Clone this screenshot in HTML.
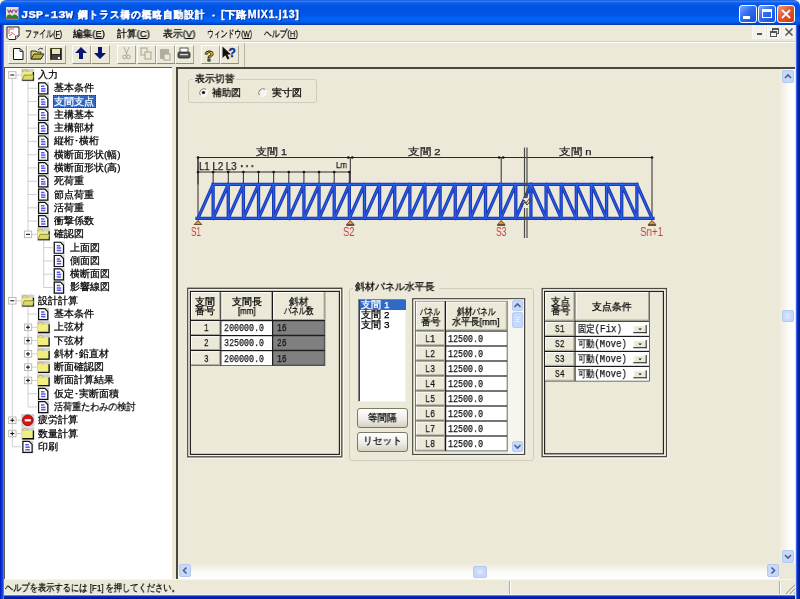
<!DOCTYPE html><html><head><meta charset="utf-8"><style>
*{box-sizing:border-box;margin:0;padding:0}
html,body{width:800px;height:599px;overflow:hidden}
body{position:relative;background:#F2F4F0;font-family:"Liberation Sans",sans-serif;font-size:9.8px;color:#000}
.a{position:absolute}
.t{position:absolute;white-space:nowrap;line-height:10px;height:10px;transform-origin:0 50%;-webkit-text-stroke:0.25px currentColor;will-change:transform}
#title{left:0;top:0;width:800px;height:25px;border-radius:6px 6px 0 0;
 background:linear-gradient(#0A3CC8 0px,#3D8EFF 1px,#1A6CF5 2px,#0558E8 4px,#0054E3 8px,#0055E6 15px,#0063F6 19px,#0064F8 21px,#0050D8 23px,#0038B0 25px)}
#menubar{left:4px;top:25px;width:792px;height:17px;background:#ECE9D8;border-bottom:1px solid #D5D1BE}
#toolbar{left:4px;top:42px;width:792px;height:25px;background:#ECE9D8;border-top:1px solid #fff}
.tb{position:absolute;top:45px;height:19px;border:1px solid;border-color:#fff #A7A493 #8F8C7E #fff;background:#ECE9D8}
#tree{left:4px;top:67px;width:168px;height:512px;background:#fff;border-left:1px solid #5E5C50;border-top:1px solid #5E5C50}
#splitter{left:172px;top:67px;width:4px;height:512px;background:#ECE9D8}
#main{left:176px;top:67px;width:619px;height:512px;background:#ECE9D8;border-left:2px solid #4A483E;border-top:2px solid #4A483E}
#status{left:4px;top:579px;width:792px;height:16px;background:#ECE9D8}
.sel{background:#316AC5;color:#fff}
.frame{position:absolute;border:1px solid;border-color:#8A877A #fff #fff #8A877A}
.frame2{position:absolute;border:1px solid;border-color:#2A2A2A #D8D4C4 #D8D4C4 #2A2A2A}
.gb{position:absolute;border:1px solid #D0CCBA;border-radius:3px}
.hd{position:absolute;background:#ECE9D8;border:1px solid;border-color:#fff #8A877A #8A877A #fff}
.cellw{position:absolute;background:#fff}
.cellg{position:absolute;background:#808080}
.btn{position:absolute;border:1px solid #7A7866;border-radius:3px;background:linear-gradient(#fff,#ECEBE4 60%,#D6D0C0)}
</style></head><body>
<div id="title" class="a"></div>
<svg class="a" style="left:6px;top:7px" width="13" height="13"><rect x="0" y="0" width="12.5" height="12.5" fill="#E8E0D0"/><path d="M1.5 2.5L3 5.5L4.5 3L6 5.5L7.5 2.5M8.5 2.5L10 5.5L11.5 2.5" stroke="#A04090" stroke-width="1.1" fill="none"/><path d="M0.5 11V9.5Q3 6 6 9Q9 6 12 9.5V11Z" fill="#208828"/><rect x="0" y="11" width="12.5" height="1.5" fill="#806040"/></svg>
<div class="t" id="t0" style="left:21.2px;top:9.5px;font-size:11px;color:#fff;font-weight:bold;text-shadow:1px 1px 0 #0A2890;font-family:Liberation Mono;transform:scaleX(1.1251);">JSP-13W</div>
<div class="t" id="t1" style="left:77.5px;top:9.5px;font-size:9.8px;color:#fff;font-weight:bold;text-shadow:1px 1px 0 #0A2890;-webkit-text-stroke:0.3px #fff;letter-spacing:1px;transform:scaleX(0.9659);">鋼トラス橋の概略自動設計</div>
<div class="t" id="t2" style="left:210.5px;top:9.5px;font-size:11px;color:#fff;font-weight:bold;text-shadow:1px 1px 0 #0A2890;font-family:Liberation Mono;transform:scaleX(0.7565);">-</div>
<div class="t" id="t3" style="left:221px;top:9.5px;font-size:10px;color:#fff;font-weight:bold;text-shadow:1px 1px 0 #0A2890;-webkit-text-stroke:0.3px #fff;letter-spacing:0.6px;transform:scaleX(1.0624);">[下路MIX1.j13]</div>
<div class="a" style="left:739px;top:5px;width:18px;height:18px;border:1px solid #fff;border-radius:3px;background:linear-gradient(135deg,#7AA8FF,#2E6CF0 45%,#1550D8)"></div>
<div class="a" style="left:758px;top:5px;width:18px;height:18px;border:1px solid #fff;border-radius:3px;background:linear-gradient(135deg,#7AA8FF,#2E6CF0 45%,#1550D8)"></div>
<div class="a" style="left:777px;top:5px;width:18px;height:18px;border:1px solid #fff;border-radius:3px;background:linear-gradient(135deg,#F09A80,#E05A30 45%,#C83C10)"></div>
<div class="a" style="left:743px;top:16px;width:7px;height:3px;background:#fff"></div>
<div class="a" style="left:762px;top:9px;width:10px;height:9px;border:1px solid #fff;border-top:3px solid #fff"></div>
<svg class="a" style="left:777px;top:5px" width="18" height="18"><path d="M5 5L13 13M13 5L5 13" stroke="#fff" stroke-width="1.8"/></svg>
<div id="menubar" class="a"></div>
<svg class="a" style="left:6px;top:25.5px" width="15" height="15"><path d="M1 1H13V10L9.5 13.5H3L1 11.5Z" fill="#fff" stroke="#222" stroke-width="1"/><path d="M3 3H8M3 3V8M5 6L9 9M3 10L6 8" stroke="#E04848" stroke-width="0.9" fill="none"/><path d="M9.5 13.5V10H13" fill="#ddd" stroke="#222" stroke-width="0.8"/></svg>
<div class="t" id="t4" style="left:25px;top:28.5px;font-size:9.8px;color:#000;;transform:scaleX(0.7046);">ファイル(<u>F</u>)</div>
<div class="t" id="t5" style="left:73px;top:28.5px;font-size:9.8px;color:#000;;transform:scaleX(0.9674);">編集(<u>E</u>)</div>
<div class="t" id="t6" style="left:117px;top:28.5px;font-size:9.8px;color:#000;;transform:scaleX(0.9819);">計算(<u>C</u>)</div>
<div class="t" id="t7" style="left:162.5px;top:28.5px;font-size:9.8px;color:#000;;transform:scaleX(0.9825);">表示(<u>V</u>)</div>
<div class="t" id="t8" style="left:207px;top:28.5px;font-size:9.8px;color:#000;;transform:scaleX(0.6841);">ウィンドウ(<u>W</u>)</div>
<div class="t" id="t9" style="left:264px;top:28.5px;font-size:9.8px;color:#000;;transform:scaleX(0.7796);">ヘルプ(<u>H</u>)</div>
<div class="a" style="left:752px;top:25px;width:14px;height:14px;background:#F3F2EC;border:1px solid #F8F7F2"></div>
<div class="a" style="left:767px;top:25px;width:14px;height:14px;background:#F3F2EC;border:1px solid #F8F7F2"></div>
<div class="a" style="left:782px;top:25px;width:14px;height:14px;background:#F3F2EC;border:1px solid #F8F7F2"></div>
<div class="a" style="left:757px;top:33px;width:5px;height:2px;background:#555"></div>
<div class="a" style="left:772px;top:28px;width:7px;height:6px;border:1px solid #555;border-top-width:2px"></div>
<div class="a" style="left:769.5px;top:31px;width:7px;height:6px;border:1px solid #555;border-top-width:2px;background:#F3F2EC"></div>
<svg class="a" style="left:784px;top:27px" width="10" height="10"><path d="M1.5 1.5L8.5 8.5M8.5 1.5L1.5 8.5" stroke="#555" stroke-width="1.5"/></svg>
<div id="toolbar" class="a"></div>
<div class="tb" style="left:8px;width:19px"></div>
<div class="tb" style="left:27px;width:19px"></div>
<div class="tb" style="left:46px;width:20px"></div>
<div class="tb" style="left:72px;width:19px"></div>
<div class="tb" style="left:91px;width:19px"></div>
<div class="tb" style="left:117px;width:19px"></div>
<div class="tb" style="left:137px;width:19px"></div>
<div class="tb" style="left:156px;width:19px"></div>
<div class="tb" style="left:175px;width:19px"></div>
<div class="tb" style="left:201px;width:19px"></div>
<div class="tb" style="left:220px;width:19px"></div>
<div class="a" style="left:244px;top:43px;width:1px;height:24px;background:#B8B4A2"></div>
<svg class="a" style="left:0;top:42px" width="250" height="26"><path d="M13.5 6.5H20L23 9.5V17.5H13.5Z" fill="#fff" stroke="#111" stroke-width="1"/><path d="M20 6.5V9.5H23" fill="none" stroke="#111" stroke-width="0.8"/><path d="M31 9H36L37 10H41V17H31Z" fill="#D8D070" stroke="#222" stroke-width="0.9"/><path d="M31 17L34 12H44L41 17Z" fill="#B8B040" stroke="#222" stroke-width="0.9"/><path d="M38 8Q40 5 43 7" fill="none" stroke="#222" stroke-width="0.9"/><rect x="50" y="6" width="12" height="12" fill="#222"/><rect x="52" y="7" width="8" height="5" fill="#E8E4C8"/><rect x="52" y="13" width="8" height="5" fill="#444"/><rect x="58" y="15" width="2" height="2" fill="#fff"/><rect x="50.5" y="6.5" width="11" height="11" fill="none" stroke="#606020" stroke-width="0.6"/><path d="M81 5L87 11H83V17H79V11H75Z" fill="#0A1470"/><path d="M100 17L94 11H98V5H102V11H106Z" fill="#0A1470"/><path d="M124 5L127 13M129 5L126 13" stroke="#A8A59A" stroke-width="0.9" fill="none"/><circle cx="124.5" cy="15" r="1.8" fill="none" stroke="#A8A59A"/><circle cx="128.5" cy="15" r="1.8" fill="none" stroke="#A8A59A"/><rect x="141" y="6" width="6" height="7" fill="none" stroke="#A8A59A"/><rect x="145" y="10" width="6" height="7" fill="#ECE9D8" stroke="#A8A59A"/><rect x="160" y="7" width="9" height="10" rx="1" fill="#B0AD9F"/><rect x="164" y="12" width="6" height="6" fill="#ECE9D8" stroke="#A8A59A"/><rect x="180" y="6" width="8" height="5" fill="#fff" stroke="#333" stroke-width="0.8"/><rect x="178" y="10" width="12" height="6" rx="1.5" fill="#555" stroke="#222" stroke-width="0.8"/><rect x="180" y="12" width="8" height="1.2" fill="#ddd"/><text x="204.5" y="18.5" font-size="15.5" font-weight="bold" fill="#F0E800" stroke="#111" stroke-width="0.8" font-family="Liberation Sans">?</text><path d="M222.5 4.5V16L225.3 13.3L227.5 17.5L229.5 16.6L227.4 12.6H231Z" fill="#111"/><text x="228.5" y="15" font-size="12" font-weight="bold" fill="#1030B0" stroke="#0A1060" stroke-width="0.3" font-family="Liberation Sans">?</text></svg>
<div id="tree" class="a"></div>
<div id="splitter" class="a"></div>
<svg class="a" style="left:0;top:0" width="176" height="599"><line x1="12.3" y1="75.0" x2="12.3" y2="446.84" stroke="#D0D0D0" stroke-width="1"/><line x1="28.0" y1="81.64" x2="28.0" y2="234.35999999999999" stroke="#D0D0D0" stroke-width="1"/><line x1="28.0" y1="307.4" x2="28.0" y2="407.0" stroke="#D0D0D0" stroke-width="1"/><line x1="43.7" y1="241.0" x2="43.7" y2="287.48" stroke="#D0D0D0" stroke-width="1"/><line x1="12.3" y1="75.0" x2="21.3" y2="75.0" stroke="#D0D0D0" stroke-width="1"/><rect x="8.700000000000001" y="71.7" width="7.3" height="6.6" fill="#fff" stroke="#B4B4AC" stroke-width="0.9"/><line x1="10.3" y1="75.0" x2="14.3" y2="75.0" stroke="#1A1A1A" stroke-width="1.1"/><rect x="21.3" y="68.8" width="13" height="12.6" fill="#D0D0D0"/><path d="M22.3 72.0L23.3 70.2H26.8L27.8 72.0Z" fill="#F6F0B0" stroke="#9A9460" stroke-width="0.6"/><rect x="22.3" y="72.0" width="11" height="8" fill="#F2EE80"/><path d="M22.3 80.2H33.4V72.0" fill="none" stroke="#111" stroke-width="1.3"/><path d="M22.3 80.0L24.3 75.0H33.8L32.8 80.0Z" fill="#DCD870" stroke="#606030" stroke-width="0.6"/><line x1="28.0" y1="88.28" x2="37.0" y2="88.28" stroke="#D0D0D0" stroke-width="1"/><rect x="37.7" y="82.08" width="11.3" height="12.8" fill="#D4D4D4"/><path d="M38.6 82.88H44.8L47.8 85.88V93.88H38.6Z" fill="#fff" stroke="#111" stroke-width="1.2"/><path d="M41.0 86.28H44.5M41.0 88.68H45.5M41.0 91.08H45.5" stroke="#5A5AE8" stroke-width="1.5"/><line x1="28.0" y1="101.56" x2="37.0" y2="101.56" stroke="#D0D0D0" stroke-width="1"/><rect x="37.7" y="95.36" width="11.3" height="12.8" fill="#D4D4D4"/><path d="M38.6 96.16H44.8L47.8 99.16V107.16H38.6Z" fill="#fff" stroke="#111" stroke-width="1.2"/><path d="M41.0 99.56H44.5M41.0 101.96000000000001H45.5M41.0 104.36H45.5" stroke="#5A5AE8" stroke-width="1.5"/><line x1="28.0" y1="114.84" x2="37.0" y2="114.84" stroke="#D0D0D0" stroke-width="1"/><rect x="37.7" y="108.64" width="11.3" height="12.8" fill="#D4D4D4"/><path d="M38.6 109.44H44.8L47.8 112.44V120.44H38.6Z" fill="#fff" stroke="#111" stroke-width="1.2"/><path d="M41.0 112.84H44.5M41.0 115.24000000000001H45.5M41.0 117.64H45.5" stroke="#5A5AE8" stroke-width="1.5"/><line x1="28.0" y1="128.12" x2="37.0" y2="128.12" stroke="#D0D0D0" stroke-width="1"/><rect x="37.7" y="121.92" width="11.3" height="12.8" fill="#D4D4D4"/><path d="M38.6 122.72H44.8L47.8 125.72V133.72H38.6Z" fill="#fff" stroke="#111" stroke-width="1.2"/><path d="M41.0 126.12H44.5M41.0 128.52H45.5M41.0 130.92000000000002H45.5" stroke="#5A5AE8" stroke-width="1.5"/><line x1="28.0" y1="141.39999999999998" x2="37.0" y2="141.39999999999998" stroke="#D0D0D0" stroke-width="1"/><rect x="37.7" y="135.2" width="11.3" height="12.8" fill="#D4D4D4"/><path d="M38.6 135.99999999999997H44.8L47.8 138.99999999999997V146.99999999999997H38.6Z" fill="#fff" stroke="#111" stroke-width="1.2"/><path d="M41.0 139.39999999999998H44.5M41.0 141.79999999999998H45.5M41.0 144.2H45.5" stroke="#5A5AE8" stroke-width="1.5"/><line x1="28.0" y1="154.68" x2="37.0" y2="154.68" stroke="#D0D0D0" stroke-width="1"/><rect x="37.7" y="148.48000000000002" width="11.3" height="12.8" fill="#D4D4D4"/><path d="M38.6 149.28H44.8L47.8 152.28V160.28H38.6Z" fill="#fff" stroke="#111" stroke-width="1.2"/><path d="M41.0 152.68H44.5M41.0 155.08H45.5M41.0 157.48000000000002H45.5" stroke="#5A5AE8" stroke-width="1.5"/><line x1="28.0" y1="167.95999999999998" x2="37.0" y2="167.95999999999998" stroke="#D0D0D0" stroke-width="1"/><rect x="37.7" y="161.76" width="11.3" height="12.8" fill="#D4D4D4"/><path d="M38.6 162.55999999999997H44.8L47.8 165.55999999999997V173.55999999999997H38.6Z" fill="#fff" stroke="#111" stroke-width="1.2"/><path d="M41.0 165.95999999999998H44.5M41.0 168.35999999999999H45.5M41.0 170.76H45.5" stroke="#5A5AE8" stroke-width="1.5"/><line x1="28.0" y1="181.24" x2="37.0" y2="181.24" stroke="#D0D0D0" stroke-width="1"/><rect x="37.7" y="175.04000000000002" width="11.3" height="12.8" fill="#D4D4D4"/><path d="M38.6 175.84H44.8L47.8 178.84V186.84H38.6Z" fill="#fff" stroke="#111" stroke-width="1.2"/><path d="M41.0 179.24H44.5M41.0 181.64000000000001H45.5M41.0 184.04000000000002H45.5" stroke="#5A5AE8" stroke-width="1.5"/><line x1="28.0" y1="194.51999999999998" x2="37.0" y2="194.51999999999998" stroke="#D0D0D0" stroke-width="1"/><rect x="37.7" y="188.32" width="11.3" height="12.8" fill="#D4D4D4"/><path d="M38.6 189.11999999999998H44.8L47.8 192.11999999999998V200.11999999999998H38.6Z" fill="#fff" stroke="#111" stroke-width="1.2"/><path d="M41.0 192.51999999999998H44.5M41.0 194.92H45.5M41.0 197.32H45.5" stroke="#5A5AE8" stroke-width="1.5"/><line x1="28.0" y1="207.79999999999998" x2="37.0" y2="207.79999999999998" stroke="#D0D0D0" stroke-width="1"/><rect x="37.7" y="201.6" width="11.3" height="12.8" fill="#D4D4D4"/><path d="M38.6 202.39999999999998H44.8L47.8 205.39999999999998V213.39999999999998H38.6Z" fill="#fff" stroke="#111" stroke-width="1.2"/><path d="M41.0 205.79999999999998H44.5M41.0 208.2H45.5M41.0 210.6H45.5" stroke="#5A5AE8" stroke-width="1.5"/><line x1="28.0" y1="221.07999999999998" x2="37.0" y2="221.07999999999998" stroke="#D0D0D0" stroke-width="1"/><rect x="37.7" y="214.88" width="11.3" height="12.8" fill="#D4D4D4"/><path d="M38.6 215.67999999999998H44.8L47.8 218.67999999999998V226.67999999999998H38.6Z" fill="#fff" stroke="#111" stroke-width="1.2"/><path d="M41.0 219.07999999999998H44.5M41.0 221.48H45.5M41.0 223.88H45.5" stroke="#5A5AE8" stroke-width="1.5"/><line x1="28.0" y1="234.35999999999999" x2="37.0" y2="234.35999999999999" stroke="#D0D0D0" stroke-width="1"/><rect x="24.4" y="231.05999999999997" width="7.3" height="6.6" fill="#fff" stroke="#B4B4AC" stroke-width="0.9"/><line x1="26.0" y1="234.35999999999999" x2="30.0" y2="234.35999999999999" stroke="#1A1A1A" stroke-width="1.1"/><rect x="37.0" y="228.16" width="13" height="12.6" fill="#D0D0D0"/><path d="M38.0 231.35999999999999L39.0 229.55999999999997H42.5L43.5 231.35999999999999Z" fill="#F6F0B0" stroke="#9A9460" stroke-width="0.6"/><rect x="38.0" y="231.35999999999999" width="11" height="8" fill="#F2EE80"/><path d="M38.0 239.55999999999997H49.1V231.35999999999999" fill="none" stroke="#111" stroke-width="1.3"/><path d="M38.0 239.35999999999999L40.0 234.35999999999999H49.5L48.5 239.35999999999999Z" fill="#DCD870" stroke="#606030" stroke-width="0.6"/><line x1="43.7" y1="247.64" x2="52.7" y2="247.64" stroke="#D0D0D0" stroke-width="1"/><rect x="53.400000000000006" y="241.44" width="11.3" height="12.8" fill="#D4D4D4"/><path d="M54.300000000000004 242.23999999999998H60.5L63.5 245.23999999999998V253.23999999999998H54.300000000000004Z" fill="#fff" stroke="#111" stroke-width="1.2"/><path d="M56.7 245.64H60.2M56.7 248.04H61.2M56.7 250.44H61.2" stroke="#5A5AE8" stroke-width="1.5"/><line x1="43.7" y1="260.91999999999996" x2="52.7" y2="260.91999999999996" stroke="#D0D0D0" stroke-width="1"/><rect x="53.400000000000006" y="254.71999999999997" width="11.3" height="12.8" fill="#D4D4D4"/><path d="M54.300000000000004 255.51999999999995H60.5L63.5 258.52V266.52H54.300000000000004Z" fill="#fff" stroke="#111" stroke-width="1.2"/><path d="M56.7 258.91999999999996H60.2M56.7 261.31999999999994H61.2M56.7 263.71999999999997H61.2" stroke="#5A5AE8" stroke-width="1.5"/><line x1="43.7" y1="274.2" x2="52.7" y2="274.2" stroke="#D0D0D0" stroke-width="1"/><rect x="53.400000000000006" y="268.0" width="11.3" height="12.8" fill="#D4D4D4"/><path d="M54.300000000000004 268.8H60.5L63.5 271.8V279.8H54.300000000000004Z" fill="#fff" stroke="#111" stroke-width="1.2"/><path d="M56.7 272.2H60.2M56.7 274.59999999999997H61.2M56.7 277.0H61.2" stroke="#5A5AE8" stroke-width="1.5"/><line x1="43.7" y1="287.48" x2="52.7" y2="287.48" stroke="#D0D0D0" stroke-width="1"/><rect x="53.400000000000006" y="281.28000000000003" width="11.3" height="12.8" fill="#D4D4D4"/><path d="M54.300000000000004 282.08000000000004H60.5L63.5 285.08000000000004V293.08000000000004H54.300000000000004Z" fill="#fff" stroke="#111" stroke-width="1.2"/><path d="M56.7 285.48H60.2M56.7 287.88H61.2M56.7 290.28000000000003H61.2" stroke="#5A5AE8" stroke-width="1.5"/><line x1="12.3" y1="300.76" x2="21.3" y2="300.76" stroke="#D0D0D0" stroke-width="1"/><rect x="8.700000000000001" y="297.46" width="7.3" height="6.6" fill="#fff" stroke="#B4B4AC" stroke-width="0.9"/><line x1="10.3" y1="300.76" x2="14.3" y2="300.76" stroke="#1A1A1A" stroke-width="1.1"/><rect x="21.3" y="294.56" width="13" height="12.6" fill="#D0D0D0"/><path d="M22.3 297.76L23.3 295.96H26.8L27.8 297.76Z" fill="#F6F0B0" stroke="#9A9460" stroke-width="0.6"/><rect x="22.3" y="297.76" width="11" height="8" fill="#F2EE80"/><path d="M22.3 305.96H33.4V297.76" fill="none" stroke="#111" stroke-width="1.3"/><path d="M22.3 305.76L24.3 300.76H33.8L32.8 305.76Z" fill="#DCD870" stroke="#606030" stroke-width="0.6"/><line x1="28.0" y1="314.03999999999996" x2="37.0" y2="314.03999999999996" stroke="#D0D0D0" stroke-width="1"/><rect x="37.7" y="307.84" width="11.3" height="12.8" fill="#D4D4D4"/><path d="M38.6 308.64H44.8L47.8 311.64V319.64H38.6Z" fill="#fff" stroke="#111" stroke-width="1.2"/><path d="M41.0 312.03999999999996H44.5M41.0 314.43999999999994H45.5M41.0 316.84H45.5" stroke="#5A5AE8" stroke-width="1.5"/><line x1="28.0" y1="327.32" x2="37.0" y2="327.32" stroke="#D0D0D0" stroke-width="1"/><rect x="24.4" y="324.02" width="7.3" height="6.6" fill="#fff" stroke="#B4B4AC" stroke-width="0.9"/><line x1="26.0" y1="327.32" x2="30.0" y2="327.32" stroke="#1A1A1A" stroke-width="1.1"/><line x1="28.0" y1="325.32" x2="28.0" y2="329.32" stroke="#1A1A1A" stroke-width="1.1"/><rect x="37.0" y="321.12" width="13" height="12.6" fill="#D0D0D0"/><path d="M38.0 324.32L39.0 322.52H42.5L43.5 324.32Z" fill="#F6F0B0" stroke="#9A9460" stroke-width="0.6"/><rect x="38.0" y="324.32" width="11" height="8" fill="#F2EE80"/><path d="M38.0 332.52H49.1V324.32" fill="none" stroke="#111" stroke-width="1.3"/><line x1="28.0" y1="340.59999999999997" x2="37.0" y2="340.59999999999997" stroke="#D0D0D0" stroke-width="1"/><rect x="24.4" y="337.29999999999995" width="7.3" height="6.6" fill="#fff" stroke="#B4B4AC" stroke-width="0.9"/><line x1="26.0" y1="340.59999999999997" x2="30.0" y2="340.59999999999997" stroke="#1A1A1A" stroke-width="1.1"/><line x1="28.0" y1="338.59999999999997" x2="28.0" y2="342.59999999999997" stroke="#1A1A1A" stroke-width="1.1"/><rect x="37.0" y="334.4" width="13" height="12.6" fill="#D0D0D0"/><path d="M38.0 337.59999999999997L39.0 335.79999999999995H42.5L43.5 337.59999999999997Z" fill="#F6F0B0" stroke="#9A9460" stroke-width="0.6"/><rect x="38.0" y="337.59999999999997" width="11" height="8" fill="#F2EE80"/><path d="M38.0 345.79999999999995H49.1V337.59999999999997" fill="none" stroke="#111" stroke-width="1.3"/><line x1="28.0" y1="353.88" x2="37.0" y2="353.88" stroke="#D0D0D0" stroke-width="1"/><rect x="24.4" y="350.58" width="7.3" height="6.6" fill="#fff" stroke="#B4B4AC" stroke-width="0.9"/><line x1="26.0" y1="353.88" x2="30.0" y2="353.88" stroke="#1A1A1A" stroke-width="1.1"/><line x1="28.0" y1="351.88" x2="28.0" y2="355.88" stroke="#1A1A1A" stroke-width="1.1"/><rect x="37.0" y="347.68" width="13" height="12.6" fill="#D0D0D0"/><path d="M38.0 350.88L39.0 349.08H42.5L43.5 350.88Z" fill="#F6F0B0" stroke="#9A9460" stroke-width="0.6"/><rect x="38.0" y="350.88" width="11" height="8" fill="#F2EE80"/><path d="M38.0 359.08H49.1V350.88" fill="none" stroke="#111" stroke-width="1.3"/><line x1="28.0" y1="367.15999999999997" x2="37.0" y2="367.15999999999997" stroke="#D0D0D0" stroke-width="1"/><rect x="24.4" y="363.85999999999996" width="7.3" height="6.6" fill="#fff" stroke="#B4B4AC" stroke-width="0.9"/><line x1="26.0" y1="367.15999999999997" x2="30.0" y2="367.15999999999997" stroke="#1A1A1A" stroke-width="1.1"/><line x1="28.0" y1="365.15999999999997" x2="28.0" y2="369.15999999999997" stroke="#1A1A1A" stroke-width="1.1"/><rect x="37.0" y="360.96" width="13" height="12.6" fill="#D0D0D0"/><path d="M38.0 364.15999999999997L39.0 362.35999999999996H42.5L43.5 364.15999999999997Z" fill="#F6F0B0" stroke="#9A9460" stroke-width="0.6"/><rect x="38.0" y="364.15999999999997" width="11" height="8" fill="#F2EE80"/><path d="M38.0 372.35999999999996H49.1V364.15999999999997" fill="none" stroke="#111" stroke-width="1.3"/><line x1="28.0" y1="380.44" x2="37.0" y2="380.44" stroke="#D0D0D0" stroke-width="1"/><rect x="24.4" y="377.14" width="7.3" height="6.6" fill="#fff" stroke="#B4B4AC" stroke-width="0.9"/><line x1="26.0" y1="380.44" x2="30.0" y2="380.44" stroke="#1A1A1A" stroke-width="1.1"/><line x1="28.0" y1="378.44" x2="28.0" y2="382.44" stroke="#1A1A1A" stroke-width="1.1"/><rect x="37.0" y="374.24" width="13" height="12.6" fill="#D0D0D0"/><path d="M38.0 377.44L39.0 375.64H42.5L43.5 377.44Z" fill="#F6F0B0" stroke="#9A9460" stroke-width="0.6"/><rect x="38.0" y="377.44" width="11" height="8" fill="#F2EE80"/><path d="M38.0 385.64H49.1V377.44" fill="none" stroke="#111" stroke-width="1.3"/><line x1="28.0" y1="393.71999999999997" x2="37.0" y2="393.71999999999997" stroke="#D0D0D0" stroke-width="1"/><rect x="37.7" y="387.52" width="11.3" height="12.8" fill="#D4D4D4"/><path d="M38.6 388.32H44.8L47.8 391.32V399.32H38.6Z" fill="#fff" stroke="#111" stroke-width="1.2"/><path d="M41.0 391.71999999999997H44.5M41.0 394.11999999999995H45.5M41.0 396.52H45.5" stroke="#5A5AE8" stroke-width="1.5"/><line x1="28.0" y1="407.0" x2="37.0" y2="407.0" stroke="#D0D0D0" stroke-width="1"/><rect x="37.7" y="400.8" width="11.3" height="12.8" fill="#D4D4D4"/><path d="M38.6 401.6H44.8L47.8 404.6V412.6H38.6Z" fill="#fff" stroke="#111" stroke-width="1.2"/><path d="M41.0 405.0H44.5M41.0 407.4H45.5M41.0 409.8H45.5" stroke="#5A5AE8" stroke-width="1.5"/><line x1="12.3" y1="420.28" x2="21.3" y2="420.28" stroke="#D0D0D0" stroke-width="1"/><rect x="8.700000000000001" y="416.97999999999996" width="7.3" height="6.6" fill="#fff" stroke="#B4B4AC" stroke-width="0.9"/><line x1="10.3" y1="420.28" x2="14.3" y2="420.28" stroke="#1A1A1A" stroke-width="1.1"/><line x1="12.3" y1="418.28" x2="12.3" y2="422.28" stroke="#1A1A1A" stroke-width="1.1"/><rect x="21.3" y="414.08" width="13" height="12.6" fill="#D0D0D0"/><circle cx="27.8" cy="420.28" r="5.4" fill="#E01010" stroke="#600" stroke-width="0.7"/><rect x="24.8" y="419.17999999999995" width="6" height="2.2" fill="#fff"/><line x1="12.3" y1="433.56" x2="21.3" y2="433.56" stroke="#D0D0D0" stroke-width="1"/><rect x="8.700000000000001" y="430.26" width="7.3" height="6.6" fill="#fff" stroke="#B4B4AC" stroke-width="0.9"/><line x1="10.3" y1="433.56" x2="14.3" y2="433.56" stroke="#1A1A1A" stroke-width="1.1"/><line x1="12.3" y1="431.56" x2="12.3" y2="435.56" stroke="#1A1A1A" stroke-width="1.1"/><rect x="21.3" y="427.36" width="13" height="12.6" fill="#D0D0D0"/><path d="M22.3 430.56L23.3 428.76H26.8L27.8 430.56Z" fill="#F6F0B0" stroke="#9A9460" stroke-width="0.6"/><rect x="22.3" y="430.56" width="11" height="8" fill="#F2EE80"/><path d="M22.3 438.76H33.4V430.56" fill="none" stroke="#111" stroke-width="1.3"/><line x1="12.3" y1="446.84" x2="21.3" y2="446.84" stroke="#D0D0D0" stroke-width="1"/><rect x="22.0" y="440.64" width="11.3" height="12.8" fill="#D4D4D4"/><path d="M22.900000000000002 441.44H29.1L32.1 444.44V452.44H22.900000000000002Z" fill="#fff" stroke="#111" stroke-width="1.2"/><path d="M25.3 444.84H28.8M25.3 447.23999999999995H29.8M25.3 449.64H29.8" stroke="#5A5AE8" stroke-width="1.5"/></svg>
<div class="t" id="t10" style="left:38px;top:70.0px;font-size:9.8px;color:#000;;">入力</div>
<div class="t" id="t11" style="left:54px;top:83.28px;font-size:9.8px;color:#000;;">基本条件</div>
<div class="a sel" style="left:52.8px;top:95.26px;width:43px;height:13px;border:1px dotted #1A3A80"></div>
<div class="t" id="t12" style="left:54px;top:96.56px;font-size:9.8px;color:#fff;;">支間支点</div>
<div class="t" id="t13" style="left:54px;top:109.84px;font-size:9.8px;color:#000;;">主構基本</div>
<div class="t" id="t14" style="left:54px;top:123.12px;font-size:9.8px;color:#000;;">主構部材</div>
<div class="t" id="t15" style="left:54px;top:136.39999999999998px;font-size:9.8px;color:#000;;">縦桁･横桁</div>
<div class="t" id="t16" style="left:54px;top:149.68px;font-size:9.8px;color:#000;;">横断面形状(幅)</div>
<div class="t" id="t17" style="left:54px;top:162.95999999999998px;font-size:9.8px;color:#000;;">横断面形状(高)</div>
<div class="t" id="t18" style="left:54px;top:176.24px;font-size:9.8px;color:#000;;">死荷重</div>
<div class="t" id="t19" style="left:54px;top:189.51999999999998px;font-size:9.8px;color:#000;;">節点荷重</div>
<div class="t" id="t20" style="left:54px;top:202.79999999999998px;font-size:9.8px;color:#000;;">活荷重</div>
<div class="t" id="t21" style="left:54px;top:216.07999999999998px;font-size:9.8px;color:#000;;">衝撃係数</div>
<div class="t" id="t22" style="left:54px;top:229.35999999999999px;font-size:9.8px;color:#000;;">確認図</div>
<div class="t" id="t23" style="left:69.5px;top:242.64px;font-size:9.8px;color:#000;;">上面図</div>
<div class="t" id="t24" style="left:69.5px;top:255.91999999999996px;font-size:9.8px;color:#000;;">側面図</div>
<div class="t" id="t25" style="left:69.5px;top:269.2px;font-size:9.8px;color:#000;;">横断面図</div>
<div class="t" id="t26" style="left:69.5px;top:282.48px;font-size:9.8px;color:#000;;">影響線図</div>
<div class="t" id="t27" style="left:38px;top:295.76px;font-size:9.8px;color:#000;;">設計計算</div>
<div class="t" id="t28" style="left:54px;top:309.03999999999996px;font-size:9.8px;color:#000;;">基本条件</div>
<div class="t" id="t29" style="left:54px;top:322.32px;font-size:9.8px;color:#000;;">上弦材</div>
<div class="t" id="t30" style="left:54px;top:335.59999999999997px;font-size:9.8px;color:#000;;">下弦材</div>
<div class="t" id="t31" style="left:54px;top:348.88px;font-size:9.8px;color:#000;;">斜材･鉛直材</div>
<div class="t" id="t32" style="left:54px;top:362.15999999999997px;font-size:9.8px;color:#000;;">断面確認図</div>
<div class="t" id="t33" style="left:54px;top:375.44px;font-size:9.8px;color:#000;;">断面計算結果</div>
<div class="t" id="t34" style="left:54px;top:388.71999999999997px;font-size:9.8px;color:#000;;">仮定･実断面積</div>
<div class="t" id="t35" style="left:54px;top:402.0px;font-size:9.8px;color:#000;;transform:scaleX(0.9067);">活荷重たわみの検討</div>
<div class="t" id="t36" style="left:38px;top:415.28px;font-size:9.8px;color:#000;;">疲労計算</div>
<div class="t" id="t37" style="left:38px;top:428.56px;font-size:9.8px;color:#000;;">数量計算</div>
<div class="t" id="t38" style="left:38px;top:441.84px;font-size:9.8px;color:#000;;">印刷</div>
<div id="main" class="a"></div>
<div class="gb" style="left:187.5px;top:79px;width:129px;height:24px"></div>
<div class="a" style="left:193px;top:74px;width:43px;height:10px;background:#ECE9D8"></div>
<div class="t" id="t39" style="left:195px;top:73.5px;font-size:9.8px;color:#000;;transform:scaleX(0.9875);">表示切替</div>
<svg class="a" style="left:196px;top:86px" width="120" height="14"><circle cx="7.5" cy="6.5" r="4.3" fill="#F4F3EE"/><path d="M4.5 9.5A4.3 4.3 0 0 1 10.5 3.5" fill="none" stroke="#808070" stroke-width="1"/><path d="M10.5 3.5A4.3 4.3 0 0 1 4.5 9.5" fill="none" stroke="#FFFFFF" stroke-width="1"/><circle cx="7.5" cy="6.5" r="1.6" fill="#111"/><circle cx="66.5" cy="6.5" r="4.3" fill="#F4F3EE"/><path d="M63.5 9.5A4.3 4.3 0 0 1 69.5 3.5" fill="none" stroke="#808070" stroke-width="1"/><path d="M69.5 3.5A4.3 4.3 0 0 1 63.5 9.5" fill="none" stroke="#FFFFFF" stroke-width="1"/></svg>
<div class="t" id="t40" style="left:212px;top:87.5px;font-size:9.8px;color:#000;;transform:scaleX(0.9667);">補助図</div>
<div class="t" id="t41" style="left:272px;top:87.5px;font-size:9.8px;color:#000;;transform:scaleX(1.0000);">実寸図</div>
<svg class="a" style="left:0;top:0" width="800" height="599"><line x1="198" y1="157.5" x2="652" y2="157.5" stroke="#2A2A2A" stroke-width="1"/><line x1="198" y1="172.0" x2="350" y2="172.0" stroke="#2A2A2A" stroke-width="1"/><line x1="198" y1="157.5" x2="198" y2="218.3" stroke="#2A2A2A" stroke-width="1"/><line x1="350.3" y1="157.5" x2="350.3" y2="218.3" stroke="#2A2A2A" stroke-width="1"/><line x1="501.2" y1="157.5" x2="501.2" y2="218.3" stroke="#2A2A2A" stroke-width="1"/><line x1="652" y1="157.5" x2="652" y2="218.3" stroke="#2A2A2A" stroke-width="1"/><circle cx="198" cy="157.5" r="1.3" fill="#111"/><circle cx="348.3" cy="157.5" r="1.3" fill="#111"/><circle cx="352.3" cy="157.5" r="1.3" fill="#111"/><circle cx="499.2" cy="157.5" r="1.3" fill="#111"/><circle cx="503.2" cy="157.5" r="1.3" fill="#111"/><circle cx="652" cy="157.5" r="1.3" fill="#111"/><line x1="198.0" y1="172" x2="198.0" y2="184.4" stroke="#2A2A2A" stroke-width="1"/><circle cx="198.0" cy="172" r="1.3" fill="#111"/><line x1="213.133" y1="172" x2="213.133" y2="184.4" stroke="#2A2A2A" stroke-width="1"/><circle cx="213.133" cy="172" r="1.3" fill="#111"/><line x1="228.266" y1="172" x2="228.266" y2="184.4" stroke="#2A2A2A" stroke-width="1"/><circle cx="228.266" cy="172" r="1.3" fill="#111"/><line x1="243.399" y1="172" x2="243.399" y2="184.4" stroke="#2A2A2A" stroke-width="1"/><circle cx="243.399" cy="172" r="1.3" fill="#111"/><line x1="258.532" y1="172" x2="258.532" y2="184.4" stroke="#2A2A2A" stroke-width="1"/><circle cx="258.532" cy="172" r="1.3" fill="#111"/><line x1="273.66499999999996" y1="172" x2="273.66499999999996" y2="184.4" stroke="#2A2A2A" stroke-width="1"/><circle cx="273.66499999999996" cy="172" r="1.3" fill="#111"/><line x1="288.798" y1="172" x2="288.798" y2="184.4" stroke="#2A2A2A" stroke-width="1"/><circle cx="288.798" cy="172" r="1.3" fill="#111"/><line x1="303.931" y1="172" x2="303.931" y2="184.4" stroke="#2A2A2A" stroke-width="1"/><circle cx="303.931" cy="172" r="1.3" fill="#111"/><line x1="319.06399999999996" y1="172" x2="319.06399999999996" y2="184.4" stroke="#2A2A2A" stroke-width="1"/><circle cx="319.06399999999996" cy="172" r="1.3" fill="#111"/><line x1="334.197" y1="172" x2="334.197" y2="184.4" stroke="#2A2A2A" stroke-width="1"/><circle cx="334.197" cy="172" r="1.3" fill="#111"/><line x1="349.33" y1="172" x2="349.33" y2="184.4" stroke="#2A2A2A" stroke-width="1"/><circle cx="349.33" cy="172" r="1.3" fill="#111"/><line x1="198" y1="157.5" x2="198" y2="172" stroke="#2A2A2A" stroke-width="1"/><path d="M213.13 184.40L636.86 184.40M197.00 218.30L653.00 218.30M213.13 184.40L213.13 218.30M228.27 184.40L228.27 218.30M243.40 184.40L243.40 218.30M258.53 184.40L258.53 218.30M273.66 184.40L273.66 218.30M288.80 184.40L288.80 218.30M303.93 184.40L303.93 218.30M319.06 184.40L319.06 218.30M334.20 184.40L334.20 218.30M349.33 184.40L349.33 218.30M364.46 184.40L364.46 218.30M379.60 184.40L379.60 218.30M394.73 184.40L394.73 218.30M409.86 184.40L409.86 218.30M425.00 184.40L425.00 218.30M440.13 184.40L440.13 218.30M455.26 184.40L455.26 218.30M470.39 184.40L470.39 218.30M485.53 184.40L485.53 218.30M500.66 184.40L500.66 218.30M515.79 184.40L515.79 218.30M530.93 184.40L530.93 218.30M546.06 184.40L546.06 218.30M561.19 184.40L561.19 218.30M576.33 184.40L576.33 218.30M591.46 184.40L591.46 218.30M606.59 184.40L606.59 218.30M621.72 184.40L621.72 218.30M636.86 184.40L636.86 218.30M198.00 218.30L213.13 184.40M213.13 218.30L228.27 184.40M228.27 218.30L243.40 184.40M243.40 218.30L258.53 184.40M258.53 218.30L273.66 184.40M273.66 218.30L288.80 184.40M288.80 218.30L303.93 184.40M303.93 218.30L319.06 184.40M319.06 218.30L334.20 184.40M334.20 218.30L349.33 184.40M349.33 218.30L364.46 184.40M364.46 218.30L379.60 184.40M379.60 218.30L394.73 184.40M394.73 218.30L409.86 184.40M409.86 218.30L424.99 184.40M425.00 218.30L440.13 184.40M440.13 218.30L455.26 184.40M455.26 218.30L470.39 184.40M470.39 218.30L485.53 184.40M485.53 218.30L500.66 184.40M500.66 218.30L515.79 184.40M515.79 218.30L530.93 184.40M530.93 184.40L546.06 218.30M546.06 184.40L561.19 218.30M561.19 184.40L576.33 218.30M576.33 184.40L591.46 218.30M591.46 184.40L606.59 218.30M606.59 184.40L621.72 218.30M621.72 184.40L636.86 218.30M636.86 184.40L651.99 218.30" stroke="#1A3BB8" stroke-width="3.3" fill="none" stroke-linecap="square"/><path d="M213.13 184.40L636.86 184.40M197.00 218.30L653.00 218.30M213.13 184.40L213.13 218.30M228.27 184.40L228.27 218.30M243.40 184.40L243.40 218.30M258.53 184.40L258.53 218.30M273.66 184.40L273.66 218.30M288.80 184.40L288.80 218.30M303.93 184.40L303.93 218.30M319.06 184.40L319.06 218.30M334.20 184.40L334.20 218.30M349.33 184.40L349.33 218.30M364.46 184.40L364.46 218.30M379.60 184.40L379.60 218.30M394.73 184.40L394.73 218.30M409.86 184.40L409.86 218.30M425.00 184.40L425.00 218.30M440.13 184.40L440.13 218.30M455.26 184.40L455.26 218.30M470.39 184.40L470.39 218.30M485.53 184.40L485.53 218.30M500.66 184.40L500.66 218.30M515.79 184.40L515.79 218.30M530.93 184.40L530.93 218.30M546.06 184.40L546.06 218.30M561.19 184.40L561.19 218.30M576.33 184.40L576.33 218.30M591.46 184.40L591.46 218.30M606.59 184.40L606.59 218.30M621.72 184.40L621.72 218.30M636.86 184.40L636.86 218.30M198.00 218.30L213.13 184.40M213.13 218.30L228.27 184.40M228.27 218.30L243.40 184.40M243.40 218.30L258.53 184.40M258.53 218.30L273.66 184.40M273.66 218.30L288.80 184.40M288.80 218.30L303.93 184.40M303.93 218.30L319.06 184.40M319.06 218.30L334.20 184.40M334.20 218.30L349.33 184.40M349.33 218.30L364.46 184.40M364.46 218.30L379.60 184.40M379.60 218.30L394.73 184.40M394.73 218.30L409.86 184.40M409.86 218.30L424.99 184.40M425.00 218.30L440.13 184.40M440.13 218.30L455.26 184.40M455.26 218.30L470.39 184.40M470.39 218.30L485.53 184.40M485.53 218.30L500.66 184.40M500.66 218.30L515.79 184.40M515.79 218.30L530.93 184.40M530.93 184.40L546.06 218.30M546.06 184.40L561.19 218.30M561.19 184.40L576.33 218.30M576.33 184.40L591.46 218.30M591.46 184.40L606.59 218.30M606.59 184.40L621.72 218.30M621.72 184.40L636.86 218.30M636.86 184.40L651.99 218.30" stroke="#2C5FE6" stroke-width="1.1" fill="none"/><line x1="524.5" y1="147.5" x2="524.5" y2="238" stroke="#4A4A4A" stroke-width="1.2"/><line x1="527" y1="147.5" x2="527" y2="238" stroke="#4A4A4A" stroke-width="1.2"/><rect x="523.5" y="198" width="4.5" height="10" fill="#ECE9D8"/><path d="M520 205L524 200L526 203L530 198" fill="none" stroke="#333" stroke-width="1"/><path d="M521 207L525 202L527 205L531 200" fill="none" stroke="#333" stroke-width="1"/><path d="M198 220.5L201.8 224.5H194.2Z" fill="#E89040" stroke="#503018" stroke-width="0.8"/><path d="M350.3 220.5L354.1 224.5H346.5Z" fill="#E89040" stroke="#503018" stroke-width="0.8"/><line x1="346.3" y1="225.5" x2="354.3" y2="225.5" stroke="#333" stroke-width="0.8"/><path d="M501.2 220.5L505.0 224.5H497.4Z" fill="#E89040" stroke="#503018" stroke-width="0.8"/><line x1="497.2" y1="225.5" x2="505.2" y2="225.5" stroke="#333" stroke-width="0.8"/><path d="M652 220.5L655.8 224.5H648.2Z" fill="#E89040" stroke="#503018" stroke-width="0.8"/><line x1="648" y1="225.5" x2="656" y2="225.5" stroke="#333" stroke-width="0.8"/></svg>
<div class="t" id="t42" style="left:256px;top:146.5px;font-size:9.8px;color:#222;;transform:scaleX(1.1004);">支間 1</div>
<div class="t" id="t43" style="left:407.5px;top:146.5px;font-size:9.8px;color:#222;;transform:scaleX(1.1536);">支間 2</div>
<div class="t" id="t44" style="left:558.7px;top:146.5px;font-size:9.8px;color:#222;;transform:scaleX(1.1536);">支間 n</div>
<div class="t" id="t45" style="left:199px;top:160.5px;font-size:11px;color:#222;;transform:scaleX(0.8767);">L1 L2 L3 ･･･</div>
<div class="t" id="t46" style="left:335.5px;top:160px;font-size:9px;color:#222;;transform:scaleX(0.8789);">Lm</div>
<div class="t" id="t47" style="left:191px;top:226.5px;font-size:12px;color:#C83C48;-webkit-text-stroke:0;transform:scaleX(0.6809);">S1</div>
<div class="t" id="t48" style="left:343px;top:226.5px;font-size:12px;color:#C83C48;-webkit-text-stroke:0;transform:scaleX(0.7830);">S2</div>
<div class="t" id="t49" style="left:495.5px;top:226.5px;font-size:12px;color:#C83C48;-webkit-text-stroke:0;transform:scaleX(0.7149);">S3</div>
<div class="t" id="t50" style="left:639.8px;top:226.5px;font-size:12px;color:#C83C48;-webkit-text-stroke:0;transform:scaleX(0.8110);">Sn+1</div>
<svg class="a" style="left:0;top:0" width="800" height="599"><line x1="187.8" y1="458.0" x2="343.0" y2="458.0" stroke="#FFFFFF" stroke-width="1.2"/><line x1="343.0" y1="288.3" x2="343.0" y2="458.0" stroke="#FFFFFF" stroke-width="1.2"/><rect x="187.8" y="288.3" width="154.0" height="168.5" fill="none" stroke="#4A4840" stroke-width="1.4"/><rect x="189.0" y="289.5" width="151.6" height="166.1" fill="none" stroke="#F4F2EA" stroke-width="1"/><rect x="190.4" y="291.4" width="148.99999999999997" height="163.0" fill="none" stroke="#1A1A1A" stroke-width="1.1"/><rect x="190.4" y="291.4" width="134.79999999999998" height="74.40000000000003" fill="#1A1A1A" stroke="none" stroke-width="1"/><rect x="191.0" y="292.0" width="29.200000000000017" height="28.0" fill="#ECE9D8" stroke="none" stroke-width="1"/><line x1="191.0" y1="292.5" x2="220.20000000000002" y2="292.5" stroke="#FFFFFF" stroke-width="1"/><line x1="191.5" y1="292.0" x2="191.5" y2="320.0" stroke="#FFFFFF" stroke-width="1"/><line x1="191.0" y1="319.5" x2="220.20000000000002" y2="319.5" stroke="#A8A596" stroke-width="1"/><line x1="219.70000000000002" y1="292.0" x2="219.70000000000002" y2="320.0" stroke="#A8A596" stroke-width="1"/><rect x="221.4" y="292.0" width="50.599999999999994" height="28.0" fill="#ECE9D8" stroke="none" stroke-width="1"/><line x1="221.4" y1="292.5" x2="272.0" y2="292.5" stroke="#FFFFFF" stroke-width="1"/><line x1="221.9" y1="292.0" x2="221.9" y2="320.0" stroke="#FFFFFF" stroke-width="1"/><line x1="221.4" y1="319.5" x2="272.0" y2="319.5" stroke="#A8A596" stroke-width="1"/><line x1="271.5" y1="292.0" x2="271.5" y2="320.0" stroke="#A8A596" stroke-width="1"/><rect x="273.20000000000005" y="292.0" width="51.39999999999992" height="28.0" fill="#ECE9D8" stroke="none" stroke-width="1"/><line x1="273.20000000000005" y1="292.5" x2="324.59999999999997" y2="292.5" stroke="#FFFFFF" stroke-width="1"/><line x1="273.70000000000005" y1="292.0" x2="273.70000000000005" y2="320.0" stroke="#FFFFFF" stroke-width="1"/><line x1="273.20000000000005" y1="319.5" x2="324.59999999999997" y2="319.5" stroke="#A8A596" stroke-width="1"/><line x1="324.09999999999997" y1="292.0" x2="324.09999999999997" y2="320.0" stroke="#A8A596" stroke-width="1"/><rect x="191.0" y="321.20000000000005" width="29.200000000000017" height="13.799999999999955" fill="#ECE9D8" stroke="none" stroke-width="1"/><line x1="191.0" y1="321.70000000000005" x2="220.20000000000002" y2="321.70000000000005" stroke="#FFFFFF" stroke-width="1"/><line x1="191.5" y1="321.20000000000005" x2="191.5" y2="335.0" stroke="#FFFFFF" stroke-width="1"/><line x1="191.0" y1="334.5" x2="220.20000000000002" y2="334.5" stroke="#A8A596" stroke-width="1"/><line x1="219.70000000000002" y1="321.20000000000005" x2="219.70000000000002" y2="335.0" stroke="#A8A596" stroke-width="1"/><rect x="221.4" y="321.20000000000005" width="50.599999999999994" height="13.799999999999955" fill="#FFFFFF" stroke="none" stroke-width="1"/><rect x="273.20000000000005" y="321.20000000000005" width="51.39999999999992" height="13.799999999999955" fill="#808080" stroke="none" stroke-width="1"/><line x1="273.20000000000005" y1="334.6" x2="324.59999999999997" y2="334.6" stroke="#5A5A5A" stroke-width="0.8"/><line x1="324.2" y1="321.20000000000005" x2="324.2" y2="335.0" stroke="#5A5A5A" stroke-width="0.8"/><rect x="191.0" y="336.20000000000005" width="29.200000000000017" height="13.799999999999955" fill="#ECE9D8" stroke="none" stroke-width="1"/><line x1="191.0" y1="336.70000000000005" x2="220.20000000000002" y2="336.70000000000005" stroke="#FFFFFF" stroke-width="1"/><line x1="191.5" y1="336.20000000000005" x2="191.5" y2="350.0" stroke="#FFFFFF" stroke-width="1"/><line x1="191.0" y1="349.5" x2="220.20000000000002" y2="349.5" stroke="#A8A596" stroke-width="1"/><line x1="219.70000000000002" y1="336.20000000000005" x2="219.70000000000002" y2="350.0" stroke="#A8A596" stroke-width="1"/><rect x="221.4" y="336.20000000000005" width="50.599999999999994" height="13.799999999999955" fill="#FFFFFF" stroke="none" stroke-width="1"/><rect x="273.20000000000005" y="336.20000000000005" width="51.39999999999992" height="13.799999999999955" fill="#808080" stroke="none" stroke-width="1"/><line x1="273.20000000000005" y1="349.6" x2="324.59999999999997" y2="349.6" stroke="#5A5A5A" stroke-width="0.8"/><line x1="324.2" y1="336.20000000000005" x2="324.2" y2="350.0" stroke="#5A5A5A" stroke-width="0.8"/><rect x="191.0" y="351.20000000000005" width="29.200000000000017" height="13.999999999999943" fill="#ECE9D8" stroke="none" stroke-width="1"/><line x1="191.0" y1="351.70000000000005" x2="220.20000000000002" y2="351.70000000000005" stroke="#FFFFFF" stroke-width="1"/><line x1="191.5" y1="351.20000000000005" x2="191.5" y2="365.2" stroke="#FFFFFF" stroke-width="1"/><line x1="191.0" y1="364.7" x2="220.20000000000002" y2="364.7" stroke="#A8A596" stroke-width="1"/><line x1="219.70000000000002" y1="351.20000000000005" x2="219.70000000000002" y2="365.2" stroke="#A8A596" stroke-width="1"/><rect x="221.4" y="351.20000000000005" width="50.599999999999994" height="13.999999999999943" fill="#FFFFFF" stroke="none" stroke-width="1"/><rect x="273.20000000000005" y="351.20000000000005" width="51.39999999999992" height="13.999999999999943" fill="#808080" stroke="none" stroke-width="1"/><line x1="273.20000000000005" y1="364.8" x2="324.59999999999997" y2="364.8" stroke="#5A5A5A" stroke-width="0.8"/><line x1="324.2" y1="351.20000000000005" x2="324.2" y2="365.2" stroke="#5A5A5A" stroke-width="0.8"/><line x1="412.8" y1="455.59999999999997" x2="525.8000000000001" y2="455.59999999999997" stroke="#FFFFFF" stroke-width="1.2"/><line x1="525.8000000000001" y1="298.8" x2="525.8000000000001" y2="455.59999999999997" stroke="#FFFFFF" stroke-width="1.2"/><rect x="412.8" y="298.8" width="111.80000000000001" height="155.59999999999997" fill="none" stroke="#4A4840" stroke-width="1.4"/><rect x="414.0" y="300.0" width="109.4" height="153.19999999999996" fill="none" stroke="#F4F2EA" stroke-width="1"/><rect x="415.3" y="301.0" width="92.09999999999997" height="150.2" fill="#1A1A1A" stroke="none" stroke-width="1"/><rect x="415.90000000000003" y="301.6" width="29.099999999999966" height="28.799999999999955" fill="#ECE9D8" stroke="none" stroke-width="1"/><line x1="415.90000000000003" y1="302.1" x2="445.0" y2="302.1" stroke="#FFFFFF" stroke-width="1"/><line x1="416.40000000000003" y1="301.6" x2="416.40000000000003" y2="330.4" stroke="#FFFFFF" stroke-width="1"/><line x1="415.90000000000003" y1="329.9" x2="445.0" y2="329.9" stroke="#A8A596" stroke-width="1"/><line x1="444.5" y1="301.6" x2="444.5" y2="330.4" stroke="#A8A596" stroke-width="1"/><rect x="446.20000000000005" y="301.6" width="60.59999999999991" height="28.799999999999955" fill="#ECE9D8" stroke="none" stroke-width="1"/><line x1="446.20000000000005" y1="302.1" x2="506.79999999999995" y2="302.1" stroke="#FFFFFF" stroke-width="1"/><line x1="446.70000000000005" y1="301.6" x2="446.70000000000005" y2="330.4" stroke="#FFFFFF" stroke-width="1"/><line x1="446.20000000000005" y1="329.9" x2="506.79999999999995" y2="329.9" stroke="#A8A596" stroke-width="1"/><line x1="506.29999999999995" y1="301.6" x2="506.29999999999995" y2="330.4" stroke="#A8A596" stroke-width="1"/><rect x="415.90000000000003" y="331.6" width="29.099999999999966" height="13.799999999999955" fill="#ECE9D8" stroke="none" stroke-width="1"/><line x1="415.90000000000003" y1="332.1" x2="445.0" y2="332.1" stroke="#FFFFFF" stroke-width="1"/><line x1="416.40000000000003" y1="331.6" x2="416.40000000000003" y2="345.4" stroke="#FFFFFF" stroke-width="1"/><line x1="415.90000000000003" y1="344.9" x2="445.0" y2="344.9" stroke="#A8A596" stroke-width="1"/><line x1="444.5" y1="331.6" x2="444.5" y2="345.4" stroke="#A8A596" stroke-width="1"/><rect x="446.20000000000005" y="331.6" width="60.59999999999991" height="13.799999999999955" fill="#FFFFFF" stroke="none" stroke-width="1"/><rect x="415.90000000000003" y="346.6" width="29.099999999999966" height="13.799999999999955" fill="#ECE9D8" stroke="none" stroke-width="1"/><line x1="415.90000000000003" y1="347.1" x2="445.0" y2="347.1" stroke="#FFFFFF" stroke-width="1"/><line x1="416.40000000000003" y1="346.6" x2="416.40000000000003" y2="360.4" stroke="#FFFFFF" stroke-width="1"/><line x1="415.90000000000003" y1="359.9" x2="445.0" y2="359.9" stroke="#A8A596" stroke-width="1"/><line x1="444.5" y1="346.6" x2="444.5" y2="360.4" stroke="#A8A596" stroke-width="1"/><rect x="446.20000000000005" y="346.6" width="60.59999999999991" height="13.799999999999955" fill="#FFFFFF" stroke="none" stroke-width="1"/><rect x="415.90000000000003" y="361.6" width="29.099999999999966" height="13.799999999999955" fill="#ECE9D8" stroke="none" stroke-width="1"/><line x1="415.90000000000003" y1="362.1" x2="445.0" y2="362.1" stroke="#FFFFFF" stroke-width="1"/><line x1="416.40000000000003" y1="361.6" x2="416.40000000000003" y2="375.4" stroke="#FFFFFF" stroke-width="1"/><line x1="415.90000000000003" y1="374.9" x2="445.0" y2="374.9" stroke="#A8A596" stroke-width="1"/><line x1="444.5" y1="361.6" x2="444.5" y2="375.4" stroke="#A8A596" stroke-width="1"/><rect x="446.20000000000005" y="361.6" width="60.59999999999991" height="13.799999999999955" fill="#FFFFFF" stroke="none" stroke-width="1"/><rect x="415.90000000000003" y="376.6" width="29.099999999999966" height="13.799999999999955" fill="#ECE9D8" stroke="none" stroke-width="1"/><line x1="415.90000000000003" y1="377.1" x2="445.0" y2="377.1" stroke="#FFFFFF" stroke-width="1"/><line x1="416.40000000000003" y1="376.6" x2="416.40000000000003" y2="390.4" stroke="#FFFFFF" stroke-width="1"/><line x1="415.90000000000003" y1="389.9" x2="445.0" y2="389.9" stroke="#A8A596" stroke-width="1"/><line x1="444.5" y1="376.6" x2="444.5" y2="390.4" stroke="#A8A596" stroke-width="1"/><rect x="446.20000000000005" y="376.6" width="60.59999999999991" height="13.799999999999955" fill="#FFFFFF" stroke="none" stroke-width="1"/><rect x="415.90000000000003" y="391.6" width="29.099999999999966" height="13.799999999999955" fill="#ECE9D8" stroke="none" stroke-width="1"/><line x1="415.90000000000003" y1="392.1" x2="445.0" y2="392.1" stroke="#FFFFFF" stroke-width="1"/><line x1="416.40000000000003" y1="391.6" x2="416.40000000000003" y2="405.4" stroke="#FFFFFF" stroke-width="1"/><line x1="415.90000000000003" y1="404.9" x2="445.0" y2="404.9" stroke="#A8A596" stroke-width="1"/><line x1="444.5" y1="391.6" x2="444.5" y2="405.4" stroke="#A8A596" stroke-width="1"/><rect x="446.20000000000005" y="391.6" width="60.59999999999991" height="13.799999999999955" fill="#FFFFFF" stroke="none" stroke-width="1"/><rect x="415.90000000000003" y="406.6" width="29.099999999999966" height="13.799999999999955" fill="#ECE9D8" stroke="none" stroke-width="1"/><line x1="415.90000000000003" y1="407.1" x2="445.0" y2="407.1" stroke="#FFFFFF" stroke-width="1"/><line x1="416.40000000000003" y1="406.6" x2="416.40000000000003" y2="420.4" stroke="#FFFFFF" stroke-width="1"/><line x1="415.90000000000003" y1="419.9" x2="445.0" y2="419.9" stroke="#A8A596" stroke-width="1"/><line x1="444.5" y1="406.6" x2="444.5" y2="420.4" stroke="#A8A596" stroke-width="1"/><rect x="446.20000000000005" y="406.6" width="60.59999999999991" height="13.799999999999955" fill="#FFFFFF" stroke="none" stroke-width="1"/><rect x="415.90000000000003" y="421.6" width="29.099999999999966" height="13.799999999999955" fill="#ECE9D8" stroke="none" stroke-width="1"/><line x1="415.90000000000003" y1="422.1" x2="445.0" y2="422.1" stroke="#FFFFFF" stroke-width="1"/><line x1="416.40000000000003" y1="421.6" x2="416.40000000000003" y2="435.4" stroke="#FFFFFF" stroke-width="1"/><line x1="415.90000000000003" y1="434.9" x2="445.0" y2="434.9" stroke="#A8A596" stroke-width="1"/><line x1="444.5" y1="421.6" x2="444.5" y2="435.4" stroke="#A8A596" stroke-width="1"/><rect x="446.20000000000005" y="421.6" width="60.59999999999991" height="13.799999999999955" fill="#FFFFFF" stroke="none" stroke-width="1"/><rect x="415.90000000000003" y="436.6" width="29.099999999999966" height="13.999999999999943" fill="#ECE9D8" stroke="none" stroke-width="1"/><line x1="415.90000000000003" y1="437.1" x2="445.0" y2="437.1" stroke="#FFFFFF" stroke-width="1"/><line x1="416.40000000000003" y1="436.6" x2="416.40000000000003" y2="450.59999999999997" stroke="#FFFFFF" stroke-width="1"/><line x1="415.90000000000003" y1="450.09999999999997" x2="445.0" y2="450.09999999999997" stroke="#A8A596" stroke-width="1"/><line x1="444.5" y1="436.6" x2="444.5" y2="450.59999999999997" stroke="#A8A596" stroke-width="1"/><rect x="446.20000000000005" y="436.6" width="60.59999999999991" height="13.999999999999943" fill="#FFFFFF" stroke="none" stroke-width="1"/><rect x="508.2" y="299.6" width="15.8" height="154" fill="#F6F5F0" stroke="none" stroke-width="1"/><line x1="542.2" y1="457.8" x2="667.6" y2="457.8" stroke="#FFFFFF" stroke-width="1.2"/><line x1="667.6" y1="288.6" x2="667.6" y2="457.8" stroke="#FFFFFF" stroke-width="1.2"/><rect x="542.2" y="288.6" width="124.19999999999993" height="168.0" fill="none" stroke="#4A4840" stroke-width="1.4"/><rect x="543.4000000000001" y="289.8" width="121.79999999999993" height="165.6" fill="none" stroke="#F4F2EA" stroke-width="1"/><rect x="544.6" y="291.4" width="118.79999999999995" height="162.40000000000003" fill="none" stroke="#1A1A1A" stroke-width="1.1"/><rect x="544.6" y="291.4" width="105.0" height="90.0" fill="#1A1A1A" stroke="none" stroke-width="1"/><rect x="545.2" y="292.0" width="29.199999999999932" height="28.599999999999966" fill="#ECE9D8" stroke="none" stroke-width="1"/><line x1="545.2" y1="292.5" x2="574.4" y2="292.5" stroke="#FFFFFF" stroke-width="1"/><line x1="545.7" y1="292.0" x2="545.7" y2="320.59999999999997" stroke="#FFFFFF" stroke-width="1"/><line x1="545.2" y1="320.09999999999997" x2="574.4" y2="320.09999999999997" stroke="#A8A596" stroke-width="1"/><line x1="573.9" y1="292.0" x2="573.9" y2="320.59999999999997" stroke="#A8A596" stroke-width="1"/><rect x="575.6" y="292.0" width="73.39999999999998" height="28.599999999999966" fill="#ECE9D8" stroke="none" stroke-width="1"/><line x1="575.6" y1="292.5" x2="649.0" y2="292.5" stroke="#FFFFFF" stroke-width="1"/><line x1="576.1" y1="292.0" x2="576.1" y2="320.59999999999997" stroke="#FFFFFF" stroke-width="1"/><line x1="575.6" y1="320.09999999999997" x2="649.0" y2="320.09999999999997" stroke="#A8A596" stroke-width="1"/><line x1="648.5" y1="292.0" x2="648.5" y2="320.59999999999997" stroke="#A8A596" stroke-width="1"/><rect x="545.2" y="321.8" width="29.199999999999932" height="13.999999999999943" fill="#ECE9D8" stroke="none" stroke-width="1"/><line x1="545.2" y1="322.3" x2="574.4" y2="322.3" stroke="#FFFFFF" stroke-width="1"/><line x1="545.7" y1="321.8" x2="545.7" y2="335.79999999999995" stroke="#FFFFFF" stroke-width="1"/><line x1="545.2" y1="335.29999999999995" x2="574.4" y2="335.29999999999995" stroke="#A8A596" stroke-width="1"/><line x1="573.9" y1="321.8" x2="573.9" y2="335.79999999999995" stroke="#A8A596" stroke-width="1"/><rect x="575.6" y="321.8" width="73.39999999999998" height="13.999999999999943" fill="#FFFFFF" stroke="none" stroke-width="1"/><rect x="545.2" y="337.0" width="29.199999999999932" height="13.799999999999955" fill="#ECE9D8" stroke="none" stroke-width="1"/><line x1="545.2" y1="337.5" x2="574.4" y2="337.5" stroke="#FFFFFF" stroke-width="1"/><line x1="545.7" y1="337.0" x2="545.7" y2="350.79999999999995" stroke="#FFFFFF" stroke-width="1"/><line x1="545.2" y1="350.29999999999995" x2="574.4" y2="350.29999999999995" stroke="#A8A596" stroke-width="1"/><line x1="573.9" y1="337.0" x2="573.9" y2="350.79999999999995" stroke="#A8A596" stroke-width="1"/><rect x="575.6" y="337.0" width="73.39999999999998" height="13.799999999999955" fill="#FFFFFF" stroke="none" stroke-width="1"/><rect x="545.2" y="352.0" width="29.199999999999932" height="13.799999999999955" fill="#ECE9D8" stroke="none" stroke-width="1"/><line x1="545.2" y1="352.5" x2="574.4" y2="352.5" stroke="#FFFFFF" stroke-width="1"/><line x1="545.7" y1="352.0" x2="545.7" y2="365.79999999999995" stroke="#FFFFFF" stroke-width="1"/><line x1="545.2" y1="365.29999999999995" x2="574.4" y2="365.29999999999995" stroke="#A8A596" stroke-width="1"/><line x1="573.9" y1="352.0" x2="573.9" y2="365.79999999999995" stroke="#A8A596" stroke-width="1"/><rect x="575.6" y="352.0" width="73.39999999999998" height="13.799999999999955" fill="#FFFFFF" stroke="none" stroke-width="1"/><rect x="545.2" y="367.0" width="29.199999999999932" height="13.799999999999955" fill="#ECE9D8" stroke="none" stroke-width="1"/><line x1="545.2" y1="367.5" x2="574.4" y2="367.5" stroke="#FFFFFF" stroke-width="1"/><line x1="545.7" y1="367.0" x2="545.7" y2="380.79999999999995" stroke="#FFFFFF" stroke-width="1"/><line x1="545.2" y1="380.29999999999995" x2="574.4" y2="380.29999999999995" stroke="#A8A596" stroke-width="1"/><line x1="573.9" y1="367.0" x2="573.9" y2="380.79999999999995" stroke="#A8A596" stroke-width="1"/><rect x="575.6" y="367.0" width="73.39999999999998" height="13.799999999999955" fill="#FFFFFF" stroke="none" stroke-width="1"/><rect x="633.3" y="325.0" width="13.5" height="8.2" fill="#ECE9D8" stroke="none" stroke-width="1"/><line x1="633.3" y1="325.5" x2="646.8" y2="325.5" stroke="#FFFFFF" stroke-width="1"/><line x1="633.8" y1="325.0" x2="633.8" y2="333.2" stroke="#FFFFFF" stroke-width="1"/><line x1="633.3" y1="332.59999999999997" x2="646.8" y2="332.59999999999997" stroke="#404040" stroke-width="1.2"/><line x1="646.2" y1="325.0" x2="646.2" y2="333.2" stroke="#404040" stroke-width="1.2"/><path d="M638.3 328.4H641.8L640.05 330.2Z" fill="#111"/><rect x="633.3" y="340.05" width="13.5" height="8.2" fill="#ECE9D8" stroke="none" stroke-width="1"/><line x1="633.3" y1="340.55" x2="646.8" y2="340.55" stroke="#FFFFFF" stroke-width="1"/><line x1="633.8" y1="340.05" x2="633.8" y2="348.25" stroke="#FFFFFF" stroke-width="1"/><line x1="633.3" y1="347.65" x2="646.8" y2="347.65" stroke="#404040" stroke-width="1.2"/><line x1="646.2" y1="340.05" x2="646.2" y2="348.25" stroke="#404040" stroke-width="1.2"/><path d="M638.3 343.45H641.8L640.05 345.25Z" fill="#111"/><rect x="633.3" y="355.1" width="13.5" height="8.2" fill="#ECE9D8" stroke="none" stroke-width="1"/><line x1="633.3" y1="355.6" x2="646.8" y2="355.6" stroke="#FFFFFF" stroke-width="1"/><line x1="633.8" y1="355.1" x2="633.8" y2="363.3" stroke="#FFFFFF" stroke-width="1"/><line x1="633.3" y1="362.7" x2="646.8" y2="362.7" stroke="#404040" stroke-width="1.2"/><line x1="646.2" y1="355.1" x2="646.2" y2="363.3" stroke="#404040" stroke-width="1.2"/><path d="M638.3 358.5H641.8L640.05 360.3Z" fill="#111"/><rect x="633.3" y="370.15000000000003" width="13.5" height="8.2" fill="#ECE9D8" stroke="none" stroke-width="1"/><line x1="633.3" y1="370.65000000000003" x2="646.8" y2="370.65000000000003" stroke="#FFFFFF" stroke-width="1"/><line x1="633.8" y1="370.15000000000003" x2="633.8" y2="378.35" stroke="#FFFFFF" stroke-width="1"/><line x1="633.3" y1="377.75" x2="646.8" y2="377.75" stroke="#404040" stroke-width="1.2"/><line x1="646.2" y1="370.15000000000003" x2="646.2" y2="378.35" stroke="#404040" stroke-width="1.2"/><path d="M638.3 373.55H641.8L640.05 375.35Z" fill="#111"/></svg>
<div class="t" id="t51" style="left:195px;top:296.5px;font-size:9.8px;color:#000;;transform:scaleX(1.0000);">支間</div>
<div class="t" id="t52" style="left:195px;top:306px;font-size:9.8px;color:#000;;transform:scaleX(1.0000);">番号</div>
<div class="t" id="t53" style="left:231.7px;top:296.5px;font-size:9.8px;color:#000;;transform:scaleX(1.0000);">支間長</div>
<div class="t" id="t54" style="left:237.6px;top:306px;font-size:8.5px;color:#000;;transform:scaleX(0.9264);">[mm]</div>
<div class="t" id="t55" style="left:288.7px;top:296.5px;font-size:9.8px;color:#000;;transform:scaleX(0.9750);">斜材</div>
<div class="t" id="t56" style="left:284px;top:306px;font-size:9.8px;color:#000;;transform:scaleX(0.7375);">パネル数</div>
<div class="t" id="t57" style="left:203.5px;top:323.3px;font-size:10px;color:#111;font-family:Liberation Mono;font-size:11.5px;transform:scaleX(0.6516);">1</div>
<div class="t" id="t58" style="left:223.5px;top:323.3px;font-size:10px;color:#111;font-family:Liberation Mono;font-size:11.5px;transform:scaleX(0.7244);">200000.0</div>
<div class="t" id="t59" style="left:276.5px;top:323.3px;font-size:10px;color:#111;font-family:Liberation Mono;font-size:11.5px;transform:scaleX(0.6878);">16</div>
<div class="t" id="t60" style="left:203.5px;top:338.40000000000003px;font-size:10px;color:#111;font-family:Liberation Mono;font-size:11.5px;transform:scaleX(0.6516);">2</div>
<div class="t" id="t61" style="left:223.5px;top:338.40000000000003px;font-size:10px;color:#111;font-family:Liberation Mono;font-size:11.5px;transform:scaleX(0.7244);">325000.0</div>
<div class="t" id="t62" style="left:276.5px;top:338.40000000000003px;font-size:10px;color:#111;font-family:Liberation Mono;font-size:11.5px;transform:scaleX(0.6878);">26</div>
<div class="t" id="t63" style="left:203.5px;top:353.5px;font-size:10px;color:#111;font-family:Liberation Mono;font-size:11.5px;transform:scaleX(0.6516);">3</div>
<div class="t" id="t64" style="left:223.5px;top:353.5px;font-size:10px;color:#111;font-family:Liberation Mono;font-size:11.5px;transform:scaleX(0.7244);">200000.0</div>
<div class="t" id="t65" style="left:276.5px;top:353.5px;font-size:10px;color:#111;font-family:Liberation Mono;font-size:11.5px;transform:scaleX(0.6878);">16</div>
<div class="gb" style="left:348.5px;top:288px;width:185.5px;height:173px"></div>
<div class="a" style="left:353px;top:283px;width:86px;height:10px;background:#ECE9D8"></div>
<div class="t" id="t66" style="left:355px;top:282px;font-size:9.8px;color:#000;;transform:scaleX(0.9938);">斜材パネル水平長</div>
<div class="a" style="left:358px;top:298.5px;width:48px;height:103px;background:#fff;border:1px solid;border-color:#808080 #F0F0F0 #F0F0F0 #808080;box-shadow:inset 1px 1px 0 #404040"></div>
<div class="a sel" style="left:359.5px;top:299.5px;width:46px;height:10px"></div>
<div class="t" id="t67" style="left:360.7px;top:299.5px;font-size:9.8px;color:#fff;;transform:scaleX(1.0116);">支間 1</div>
<div class="t" id="t68" style="left:360.7px;top:309.5px;font-size:9.8px;color:#000;;transform:scaleX(1.0116);">支間 2</div>
<div class="t" id="t69" style="left:360.7px;top:319.5px;font-size:9.8px;color:#000;;transform:scaleX(1.0116);">支間 3</div>
<div class="btn" style="left:357px;top:408px;width:51px;height:20px"></div>
<div class="btn" style="left:357px;top:432px;width:51px;height:20px"></div>
<div class="t" id="t70" style="left:368.3px;top:412.5px;font-size:9.8px;color:#000;;transform:scaleX(0.9500);">等間隔</div>
<div class="t" id="t71" style="left:362.5px;top:436px;font-size:9.8px;color:#000;;transform:scaleX(0.9750);">リセット</div>
<div class="t" id="t72" style="left:420px;top:306.5px;font-size:9.8px;color:#000;;transform:scaleX(0.6667);">パネル</div>
<div class="t" id="t73" style="left:420.5px;top:316.5px;font-size:9.8px;color:#000;;transform:scaleX(0.9750);">番号</div>
<div class="t" id="t74" style="left:456.7px;top:306.5px;font-size:9.8px;color:#000;;transform:scaleX(0.7700);">斜材パネル</div>
<div class="t" id="t75" style="left:451.7px;top:316.5px;font-size:9.8px;color:#000;;transform:scaleX(0.9176);">水平長[mm]</div>
<div class="t" id="t76" style="left:425px;top:333.5px;font-size:10px;color:#111;font-family:Liberation Mono;font-size:11.5px;transform:scaleX(0.7240);">L1</div>
<div class="t" id="t77" style="left:448.3px;top:333.5px;font-size:10px;color:#111;font-family:Liberation Mono;font-size:11.5px;transform:scaleX(0.7245);">12500.0</div>
<div class="t" id="t78" style="left:425px;top:348.5px;font-size:10px;color:#111;font-family:Liberation Mono;font-size:11.5px;transform:scaleX(0.7240);">L2</div>
<div class="t" id="t79" style="left:448.3px;top:348.5px;font-size:10px;color:#111;font-family:Liberation Mono;font-size:11.5px;transform:scaleX(0.7245);">12500.0</div>
<div class="t" id="t80" style="left:425px;top:363.5px;font-size:10px;color:#111;font-family:Liberation Mono;font-size:11.5px;transform:scaleX(0.7240);">L3</div>
<div class="t" id="t81" style="left:448.3px;top:363.5px;font-size:10px;color:#111;font-family:Liberation Mono;font-size:11.5px;transform:scaleX(0.7245);">12500.0</div>
<div class="t" id="t82" style="left:425px;top:378.5px;font-size:10px;color:#111;font-family:Liberation Mono;font-size:11.5px;transform:scaleX(0.7240);">L4</div>
<div class="t" id="t83" style="left:448.3px;top:378.5px;font-size:10px;color:#111;font-family:Liberation Mono;font-size:11.5px;transform:scaleX(0.7245);">12500.0</div>
<div class="t" id="t84" style="left:425px;top:393.5px;font-size:10px;color:#111;font-family:Liberation Mono;font-size:11.5px;transform:scaleX(0.7240);">L5</div>
<div class="t" id="t85" style="left:448.3px;top:393.5px;font-size:10px;color:#111;font-family:Liberation Mono;font-size:11.5px;transform:scaleX(0.7245);">12500.0</div>
<div class="t" id="t86" style="left:425px;top:408.5px;font-size:10px;color:#111;font-family:Liberation Mono;font-size:11.5px;transform:scaleX(0.7240);">L6</div>
<div class="t" id="t87" style="left:448.3px;top:408.5px;font-size:10px;color:#111;font-family:Liberation Mono;font-size:11.5px;transform:scaleX(0.7245);">12500.0</div>
<div class="t" id="t88" style="left:425px;top:423.5px;font-size:10px;color:#111;font-family:Liberation Mono;font-size:11.5px;transform:scaleX(0.7240);">L7</div>
<div class="t" id="t89" style="left:448.3px;top:423.5px;font-size:10px;color:#111;font-family:Liberation Mono;font-size:11.5px;transform:scaleX(0.7245);">12500.0</div>
<div class="t" id="t90" style="left:425px;top:438.5px;font-size:10px;color:#111;font-family:Liberation Mono;font-size:11.5px;transform:scaleX(0.7240);">L8</div>
<div class="t" id="t91" style="left:448.3px;top:438.5px;font-size:10px;color:#111;font-family:Liberation Mono;font-size:11.5px;transform:scaleX(0.7245);">12500.0</div>
<div class="a" style="left:512px;top:300px;width:11px;height:11px;border-radius:2px;background:#C6D8FC;border:1px solid #B8CCF4"></div>
<svg class="a" style="left:512px;top:300px" width="11" height="11"><path d="M2.5 7L5.5 4L8.5 7" fill="none" stroke="#4D6185" stroke-width="1.6"/></svg>
<div class="a" style="left:512px;top:312px;width:11px;height:16px;border-radius:2px;background:#C6D8FC;border:1px solid #B8CCF4"></div>
<svg class="a" style="left:512px;top:312px" width="11" height="16"><path d="M3.5 5.5H7.5M3.5 7.5H7.5M3.5 9.5H7.5" stroke="#EEF4FE" stroke-width="0.9"/></svg>
<div class="a" style="left:512px;top:441px;width:11px;height:11px;border-radius:2px;background:#C6D8FC;border:1px solid #B8CCF4"></div>
<svg class="a" style="left:512px;top:441px" width="11" height="11"><path d="M2.5 4L5.5 7L8.5 4" fill="none" stroke="#4D6185" stroke-width="1.6"/></svg>
<div class="t" id="t92" style="left:550.6px;top:296.6px;font-size:9.8px;color:#000;;transform:scaleX(0.9600);">支点</div>
<div class="t" id="t93" style="left:550.6px;top:305.8px;font-size:9.8px;color:#000;;transform:scaleX(0.9600);">番号</div>
<div class="t" id="t94" style="left:592px;top:302px;font-size:9.8px;color:#000;;transform:scaleX(0.9900);">支点条件</div>
<div class="t" id="t95" style="left:554.8px;top:323.5px;font-size:10px;color:#111;font-family:Liberation Mono;font-size:11.5px;transform:scaleX(0.6878);">S1</div>
<div class="t" id="t96" style="left:578px;top:323.5px;font-size:10px;color:#111;;transform:scaleX(0.8299);">固定<span style="font-family:Liberation Mono;font-size:11px">(Fix)</span></div>
<div class="t" id="t97" style="left:554.8px;top:338.55px;font-size:10px;color:#111;font-family:Liberation Mono;font-size:11.5px;transform:scaleX(0.6878);">S2</div>
<div class="t" id="t98" style="left:578px;top:338.55px;font-size:10px;color:#111;;transform:scaleX(0.8187);">可動<span style="font-family:Liberation Mono;font-size:11px">(Move)</span></div>
<div class="t" id="t99" style="left:554.8px;top:353.6px;font-size:10px;color:#111;font-family:Liberation Mono;font-size:11.5px;transform:scaleX(0.6878);">S3</div>
<div class="t" id="t100" style="left:578px;top:353.6px;font-size:10px;color:#111;;transform:scaleX(0.8187);">可動<span style="font-family:Liberation Mono;font-size:11px">(Move)</span></div>
<div class="t" id="t101" style="left:554.8px;top:368.65px;font-size:10px;color:#111;font-family:Liberation Mono;font-size:11.5px;transform:scaleX(0.6878);">S4</div>
<div class="t" id="t102" style="left:578px;top:368.65px;font-size:10px;color:#111;;transform:scaleX(0.8187);">可動<span style="font-family:Liberation Mono;font-size:11px">(Move)</span></div>
<div class="a" style="left:779px;top:69px;width:16px;height:494px;background:linear-gradient(90deg,#ECE9D8,#FCFCF8 60%,#FFFFFF)"></div>
<div class="a" style="left:178px;top:563px;width:601px;height:16px;background:linear-gradient(#ECE9D8,#FCFCF8 60%,#FFFFFF)"></div>
<div class="a" style="left:779px;top:563px;width:16px;height:16px;background:#ECE9D8"></div>
<div class="a" style="left:782px;top:70px;width:12px;height:13px;border-radius:2px;background:#C6D8FC;border:1px solid #B4C8F0"></div>
<svg class="a" style="left:782px;top:70px" width="12" height="13"><path d="M3 8L6 5L9 8" fill="none" stroke="#4D6185" stroke-width="1.6"/></svg>
<div class="a" style="left:782px;top:550px;width:12px;height:13px;border-radius:2px;background:#C6D8FC;border:1px solid #B4C8F0"></div>
<svg class="a" style="left:782px;top:550px" width="12" height="13"><path d="M3 5L6 8L9 5" fill="none" stroke="#4D6185" stroke-width="1.6"/></svg>
<div class="a" style="left:179px;top:564px;width:12px;height:13px;border-radius:2px;background:#C6D8FC;border:1px solid #B4C8F0"></div>
<svg class="a" style="left:179px;top:564px" width="12" height="13"><path d="M7.5 3.5L4.5 6.5L7.5 9.5" fill="none" stroke="#4D6185" stroke-width="1.6"/></svg>
<div class="a" style="left:767px;top:564px;width:12px;height:13px;border-radius:2px;background:#C6D8FC;border:1px solid #B4C8F0"></div>
<svg class="a" style="left:767px;top:564px" width="12" height="13"><path d="M4.5 3.5L7.5 6.5L4.5 9.5" fill="none" stroke="#4D6185" stroke-width="1.6"/></svg>
<div class="a" style="left:782px;top:310px;width:11.5px;height:12px;border-radius:2px;background:#C6D8FC;border:1px solid #B4C8F0"></div>
<svg class="a" style="left:782px;top:310px" width="12" height="12"><path d="M3.5 4H8M3.5 6H8M3.5 8H8" stroke="#EEF4FE" stroke-width="0.9"/></svg>
<div class="a" style="left:473px;top:565.5px;width:13.5px;height:12px;border-radius:2px;background:#C6D8FC;border:1px solid #B4C8F0"></div>
<svg class="a" style="left:473px;top:565.5px" width="14" height="12"><path d="M5 3.5V8.5M7 3.5V8.5M9 3.5V8.5" stroke="#EEF4FE" stroke-width="0.9"/></svg>
<div id="status" class="a"></div>
<div class="a" style="left:4px;top:579px;width:792px;height:1px;background:#F6F5EE"></div>
<div class="a" style="left:509px;top:581px;width:1px;height:14px;background:#B0AC9C"></div>
<div class="a" style="left:510px;top:581px;width:1px;height:14px;background:#FFF"></div>
<div class="a" style="left:779px;top:581px;width:1px;height:14px;background:#B0AC9C"></div>
<div class="a" style="left:780px;top:581px;width:1px;height:14px;background:#FFF"></div>
<svg class="a" style="left:782px;top:581px" width="14" height="14"><path d="M13 4L4 13M13 8L8 13M13 12L12 13" stroke="#A8A594" stroke-width="1.2"/><path d="M13 5.2L5.2 13M13 9.2L9.2 13" stroke="#fff" stroke-width="0.8"/></svg>
<div class="t" id="t103" style="left:5px;top:583px;font-size:9.8px;color:#000;;transform:scaleX(0.8242);">ヘルプを表示するには [F1] を押してください。</div>
<div class="a" style="left:0;top:25px;width:4px;height:574px;background:linear-gradient(90deg,#0014C0 0,#0A36DA 1.6px,#1C4CE4 2.8px,#7096EC 4px)"></div>
<div class="a" style="left:795px;top:25px;width:5px;height:574px;background:linear-gradient(90deg,#E4E2D8 0,#E4E2D8 0.6px,#88A8F4 1px,#0A42DA 1.8px,#0530C8 2.6px,#00209E 3.8px,#00168A 5px)"></div>
<div class="a" style="left:4px;top:594px;width:791px;height:5px;background:linear-gradient(180deg,#F0F4F4 0,#F0F4F4 0.8px,#6A88D8 1.4px,#0830C0 2.2px,#0626B8 3px,#00168E 5px)"></div>
</body></html>
